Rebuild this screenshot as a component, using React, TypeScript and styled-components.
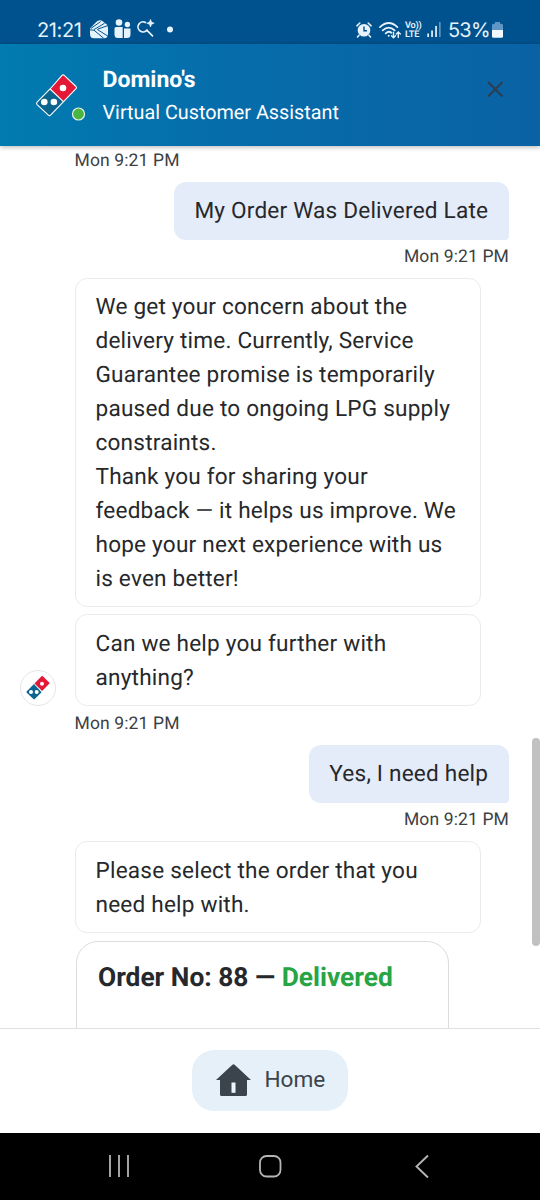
import React from "react";
import styled, { createGlobalStyle } from "styled-components";

const GlobalStyle = createGlobalStyle`
  *, *::before, *::after { box-sizing: border-box; }
  body {
    margin: 0;
    background: #fff;
    font-family: Roboto, "Liberation Sans", sans-serif;
    color: #26282b;
    text-rendering: geometricPrecision;
  }
`;

const Screen = styled.div`
  width: 540px;
  height: 1200px;
  display: flex;
  flex-direction: column;
  overflow: hidden;
  background: #fff;
`;

const StatusBar = styled.div`
  flex: none;
  height: 44px;
  padding: 16px 37px 0 37px;
  display: flex;
  justify-content: space-between;
  background: #00528f;
  color: #e6f2fc;
`;

const StatusGroup = styled.div`
  display: flex;
  align-items: center;
  height: 28px;
`;

const StatusText = styled.span<{ $spacing: number; $width: number; $ml?: number }>`
  flex: none;
  width: ${(p) => p.$width}px;
  margin-left: ${(p) => p.$ml ?? 0}px;
  font-family: Inter, Roboto, sans-serif;
  font-size: 20px;
  line-height: 28px;
  white-space: nowrap;
  letter-spacing: ${(p) => p.$spacing}px;
`;

const Icon = styled.svg<{ $ml?: number }>`
  display: block;
  flex: none;
  margin-left: ${(p) => p.$ml ?? 0}px;
  overflow: visible;
`;

const VolteLabel = styled.span`
  flex: none;
  display: flex;
  flex-direction: column;
  width: 16px;
  margin-left: 4px;
  padding-top: 2px;
  font-size: 9.2px;
  font-weight: 600;
  line-height: 8.6px;
  letter-spacing: -0.2px;
  white-space: nowrap;
`;

const Header = styled.header`
  flex: none;
  position: relative;
  z-index: 1;
  height: 101.5px;
  padding: 0 35px 0 35px;
  display: flex;
  background: linear-gradient(90deg, #017bb0 0%, #066dab 40%, #0a62a4 100%);
  color: #fff;
  box-shadow: 0 1px 5px rgba(0, 0, 0, 0.3);
`;

const Brand = styled.div`
  display: flex;
  padding-top: 29px;
  width: 67.5px;
`;

const Titles = styled.div`
  flex: 1;
  padding-top: 19px;
`;

const BotName = styled.h1`
  margin: 0;
  font-size: 23px;
  font-weight: 700;
  line-height: 33px;
`;

const BotRole = styled.p`
  margin: 0;
  font-size: 19.8px;
  line-height: 34px;
`;

const CloseButton = styled.button`
  align-self: flex-start;
  margin-top: 36px;
  padding: 0;
  border: 0;
  background: none;
`;

const Conversation = styled.main`
  flex: none;
  height: 882.5px;
  overflow: hidden;
  display: flex;
  background: #fff;
`;

const Thread = styled.div`
  flex: 1;
  padding: 2px 0 0 19.5px;
  display: flex;
  flex-direction: column;

  > * {
    flex: none;
  }
`;

const BotTurn = styled.section`
  display: flex;
  align-items: flex-end;
`;

const AvatarSlot = styled.div`
  flex: none;
  width: 55px;
`;

const Avatar = styled.div`
  width: 36px;
  height: 36px;
  border-radius: 50%;
  border: 1.5px solid #e4e5e7;
  display: flex;
  align-items: center;
  justify-content: center;
`;

const Stack = styled.div`
  display: flex;
  flex-direction: column;
  gap: 7px;
`;

const BotBubble = styled.div`
  width: 406.5px;
  padding: 11.3px 20px 10.6px;
  border: 1px solid #ebebed;
  border-radius: 12px;
  font-size: 22.6px;
  line-height: 33.96px;
  letter-spacing: 0.2px;
  white-space: pre;
`;

const UserBubble = styled.div`
  align-self: flex-end;
  margin-right: 22.5px;
  padding: 12px 20.8px;
  border-radius: 12px 12px 4px 12px;
  background: #e4ebf9;
  font-size: 22.6px;
  line-height: 34px;
  letter-spacing: 0.2px;
  white-space: nowrap;
`;

const Time = styled.time<{ $side: "bot" | "user"; $first?: boolean }>`
  ${(p) => (p.$side === "bot" ? "margin-left: 55px;" : "align-self: flex-end; margin-right: 22.5px;")}
  height: ${(p) => (p.$first ? 34 : 38.5)}px;
  padding-top: ${(p) => (p.$first ? 2.5 : 6.7)}px;
  font-size: 17.5px;
  line-height: 22px;
  letter-spacing: 0.13px;
  color: #3c4043;
`;

const OrderCard = styled.article`
  width: 373px;
  height: 160px;
  margin: 1px 0 0 1.5px;
  padding: 18px 21px;
  border: 1.5px solid #dcdcde;
  border-radius: 22px;
  font-size: 26.35px;
  font-weight: 700;
  line-height: 36px;
  white-space: nowrap;
`;

const Delivered = styled.span`
  color: #27a544;
`;

const ScrollTrack = styled.div`
  flex: none;
  width: 8.5px;
  padding-top: 592px;
`;

const ScrollThumb = styled.div`
  width: 8px;
  height: 208px;
  border-radius: 4px;
  background: #c1c1c1;
`;

const Footer = styled.footer`
  flex: none;
  height: 104.5px;
  border-top: 1px solid #dfe0e2;
  padding-top: 21px;
  display: flex;
  justify-content: center;
  align-items: flex-start;
`;

const HomeButton = styled.button`
  width: 156px;
  height: 61px;
  padding: 0 0 1.5px 24px;
  border: 0;
  border-radius: 22px;
  background: #e5f0f8;
  color: #3b444d;
  display: flex;
  align-items: center;
  gap: 13.5px;
  font-family: inherit;
  font-size: 22.6px;
`;

const NavBar = styled.nav`
  flex: none;
  height: 67.5px;
  background: #000;
  display: flex;
  justify-content: space-between;
  align-items: flex-start;
  padding: 22px 111px 0 108px;
`;

function BrandIcon() {
  return (
    <Icon width="52" height="52" viewBox="0 0 52 52">
      <path d="M15.1 16 2.1 29.2Q1 30.4 2.1 31.6L13.4 42.2Q14.5 43.2 15.6 42.2L28.4 28.7Z" fill="#0b648d" />
      <path d="M15.1 16 27 2.4Q28.1 1.3 29.2 2.4L41 13.5Q42 14.6 41 15.7L28.4 28.7Z" fill="#e31837" />
      <path d="M15.1 16 27 2.4Q28.1 1.3 29.2 2.4L41 13.5Q42 14.6 41 15.7L15.6 42.2Q14.5 43.2 13.4 42.2L2.1 31.6Q1 30.4 2.1 29.2ZM15.1 16 28.4 28.7" fill="none" stroke="#fff" strokeWidth="1.1" />
      <circle cx="28" cy="15" r="3.3" fill="#fff" />
      <circle cx="9.3" cy="29" r="3.3" fill="#fff" />
      <circle cx="18.9" cy="29" r="3.3" fill="#fff" />
      <circle cx="43.5" cy="41" r="6" fill="#4bb543" stroke="#e6f1e6" strokeWidth="1.2" />
    </Icon>
  );
}

function AvatarIcon() {
  return (
    <svg width="24" height="24" viewBox="0 0 24 24">
      <path d="M8 8 .8 15.3Q0 16 .8 16.7L7.4 23.1Q8.1 23.7 8.8 23.1L15.6 16.3Z" fill="#0c6491" />
      <path d="m8.5 7.5 7-7.2q.7-.6 1.4 0l6.3 6.1q.7.7 0 1.4L16.1 15Z" fill="#e31837" />
      <circle cx="16" cy="7.8" r="2" fill="#fff" />
      <circle cx="5" cy="15.9" r="2" fill="#fff" />
      <circle cx="10.7" cy="15.9" r="2" fill="#fff" />
    </svg>
  );
}

function NoticeIcons() {
  return (
    <Icon width="86" height="22" viewBox="0 0 86 22" fill="#e6f2fc">
      <path d="M1 9.5 7.2 3Q10.2.2 13 1.8L17.5 5.2Q19 6.6 19 9V15Q19 19.2 15 19.2H4.8Q1 19.2 1 15Z" />
      <path d="M2 9.4 11.6 2.6M5 10.6 15.6 4.2M.5 10.8 5 11.2 14.6 19.2M9 10 19.4 6.4M8.2 10.4 19 17.2" fill="none" stroke="#00528f" strokeWidth="1" />
      <circle cx="30" cy="3.5" r="3.3" />
      <circle cx="38.4" cy="5.5" r="2.7" />
      <path d="M25.5 9.5Q25.5 8 27 8H33.7V19H28.8Q25.5 19 25.5 15.5ZM35 9.5H41.5V15.5Q41.5 19 38.2 19H35Z" />
      <path d="M56.5 3.6A5 5 0 1 0 58 11M58 11.3 63.5 16.9" fill="none" stroke="#e6f2fc" strokeWidth="1.7" strokeLinecap="round" />
      <path d="M61.5.4 62.6 3.1 65.2 4.2 62.6 5.3 61.5 8 60.4 5.3 57.8 4.2 60.4 3.1Z" stroke="#e6f2fc" strokeWidth=".6" />
      <circle cx="81" cy="10.5" r="3" />
    </Icon>
  );
}

function AlarmIcon() {
  return (
    <Icon width="16" height="16" viewBox="0 0 16 16">
      <circle cx="8" cy="8.3" r="6.3" fill="#e6f2fc" />
      <path d="M.9 3.8 3.8 1M15.1 3.8 12.2 1M3 13.3 1.5 15M13 13.3 14.5 15" stroke="#e6f2fc" strokeWidth="1.6" strokeLinecap="round" />
      <path d="M8 4.5v4.2h3" fill="none" stroke="#00528f" strokeWidth="1.4" />
    </Icon>
  );
}

function WifiIcon() {
  return (
    <Icon $ml={7} width="22" height="17" viewBox="0 0 22 17" fill="none" stroke="#e6f2fc" strokeWidth="1.8" strokeLinecap="round">
      <path d="M1 5.1Q9.7-3 18.4 5.1M3.7 8.4Q9.7 2.8 15.7 8.4M6.7 11.3Q9.7 8.5 12.4 10.7" />
      <path d="M14.5 10.2v5.5m-2-2 2 2 2-2M19.3 15.4V9.9m-2 2 2-2 2 2" strokeWidth="1.4" />
      <circle cx="9.7" cy="13.8" r="1" fill="#e6f2fc" stroke="none" />
    </Icon>
  );
}

function SignalIcon() {
  return (
    <Icon $ml={6} width="15" height="16" viewBox="0 0 15 16" fill="#e6f2fc">
      <rect x=".3" y="11.5" width="1.7" height="3.5" />
      <rect x="4.2" y="8.5" width="1.7" height="6.5" />
      <rect x="8.2" y="4" width="1.7" height="11" />
      <rect x="12" y="0" width="1.7" height="15" opacity=".4" />
    </Icon>
  );
}

function BatteryIcon() {
  return (
    <Icon width="11" height="16" viewBox="0 0 11 16">
      <path d="M3 0h5v1.7h1.5Q11 1.7 11 3.2V8H0V3.2Q0 1.7 1.5 1.7H3Z" fill="#5f96c5" />
      <path d="M0 8h11v6.2Q11 15.7 9.5 15.7h-8Q0 15.7 0 14.2Z" fill="#f2f8fd" />
    </Icon>
  );
}

export default function App() {
  return (
    <>
      <GlobalStyle />
      <Screen>
        <StatusBar>
          <StatusGroup>
            <StatusText $spacing={-0.4} $width={52}>21:21</StatusText>
            <NoticeIcons />
          </StatusGroup>
          <StatusGroup>
            <AlarmIcon />
            <WifiIcon />
            <VolteLabel>
              <span>Vo))</span>
              <span>LTE</span>
            </VolteLabel>
            <SignalIcon />
            <StatusText $spacing={-0.8} $width={44} $ml={6}>53%</StatusText>
            <BatteryIcon />
          </StatusGroup>
        </StatusBar>
        <Header>
          <Brand>
            <BrandIcon />
          </Brand>
          <Titles>
            <BotName>Domino's</BotName>
            <BotRole>Virtual Customer Assistant</BotRole>
          </Titles>
          <CloseButton aria-label="Close">
            <Icon width="19" height="19" viewBox="0 0 19 19" fill="none" stroke="#2c3e50" strokeWidth="2.1">
              <path d="m2 2 14.5 14.5M16.5 2 2 16.5" />
            </Icon>
          </CloseButton>
        </Header>
        <Conversation>
          <Thread>
            <Time $side="bot" $first>Mon 9:21 PM</Time>
            <UserBubble>My Order Was Delivered Late</UserBubble>
            <Time $side="user">Mon 9:21 PM</Time>
            <BotTurn>
              <AvatarSlot>
                <Avatar>
                  <AvatarIcon />
                </Avatar>
              </AvatarSlot>
              <Stack>
                <BotBubble>{`We get your concern about the
delivery time. Currently, Service
Guarantee promise is temporarily
paused due to ongoing LPG supply
constraints.
Thank you for sharing your
feedback — it helps us improve. We
hope your next experience with us
is even better!`}</BotBubble>
                <BotBubble>{`Can we help you further with
anything?`}</BotBubble>
              </Stack>
            </BotTurn>
            <Time $side="bot">Mon 9:21 PM</Time>
            <UserBubble>Yes, I need help</UserBubble>
            <Time $side="user">Mon 9:21 PM</Time>
            <BotTurn>
              <AvatarSlot />
              <Stack>
                <BotBubble>{`Please select the order that you
need help with.`}</BotBubble>
                <OrderCard>
                  Order No: 88 — <Delivered>Delivered</Delivered>
                </OrderCard>
              </Stack>
            </BotTurn>
          </Thread>
          <ScrollTrack>
            <ScrollThumb />
          </ScrollTrack>
        </Conversation>
        <Footer>
          <HomeButton>
            <Icon width="35" height="32" viewBox="0 0 35 32">
              <path d="M16.4.7q1.1-1 2.2 0L35 16h-4v14.5q0 1.5-1.5 1.5h-24Q4 32 4 30.5V16H0Z" fill="#3b444d" />
              <rect x="15.5" y="18.5" width="4" height="10.3" fill="#edf5fa" />
            </Icon>
            Home
          </HomeButton>
        </Footer>
        <NavBar>
          <Icon width="21" height="22" viewBox="0 0 21 22" stroke="#b5b5b5" strokeWidth="1.8">
            <path d="M2 0v22M11 0v22M20 0v22" />
          </Icon>
          <Icon width="27" height="23" viewBox="0 0 27 23">
            <rect x="1" y="1" width="20.5" height="20.5" rx="6.5" fill="none" stroke="#b5b5b5" strokeWidth="1.8" />
          </Icon>
          <Icon width="14" height="23" viewBox="0 0 14 23" fill="none" stroke="#b5b5b5" strokeWidth="1.9">
            <path d="M13 .5 1.5 11.5 13 22.5" />
          </Icon>
        </NavBar>
      </Screen>
    </>
  );
}
